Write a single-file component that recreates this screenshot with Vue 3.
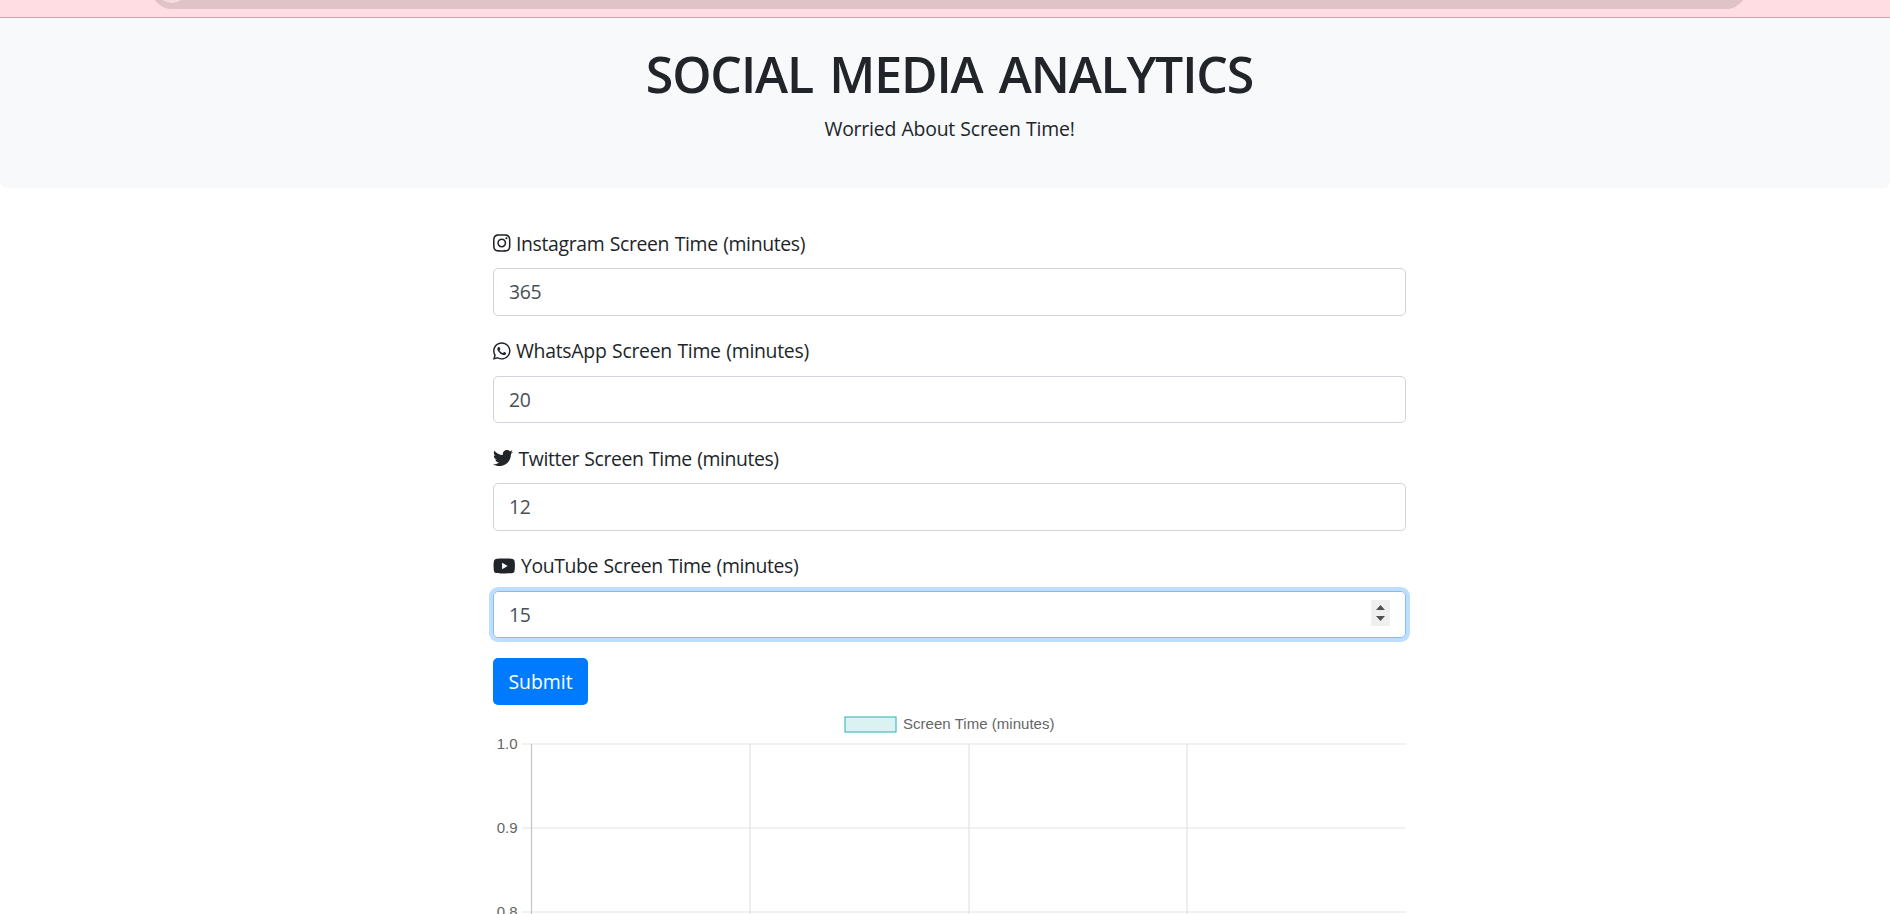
<script setup>
const fields = [
  { id: 'instagram', label: 'Instagram Screen Time (minutes)', value: 365, w: 448, d: 'M224.1 141c-63.6 0-114.9 51.3-114.9 114.9s51.3 114.9 114.9 114.9S339 319.5 339 255.9 287.7 141 224.1 141zm0 189.6c-41.1 0-74.7-33.5-74.7-74.7s33.5-74.7 74.7-74.7 74.7 33.5 74.7 74.7-33.6 74.7-74.7 74.7zm146.4-194.3c0 14.9-12 26.8-26.8 26.8-14.9 0-26.8-12-26.8-26.8s12-26.8 26.8-26.8 26.8 12 26.8 26.8zm76.1 27.2c-1.7-35.9-9.9-67.7-36.2-93.9-26.2-26.2-58-34.4-93.9-36.2-37-2.1-147.9-2.1-184.9 0-35.8 1.7-67.6 9.9-93.9 36.1s-34.4 58-36.2 93.9c-2.1 37-2.1 147.9 0 184.9 1.7 35.9 9.9 67.7 36.2 93.9s58 34.4 93.9 36.2c37 2.1 147.9 2.1 184.9 0 35.9-1.7 67.7-9.9 93.9-36.2 26.2-26.2 34.4-58 36.2-93.9 2.1-37 2.1-147.8 0-184.8zM398.8 388c-7.8 19.6-22.9 34.7-42.6 42.6-29.5 11.7-99.5 9-132.1 9s-102.7 2.6-132.1-9c-19.6-7.8-34.7-22.9-42.6-42.6-11.7-29.5-9-99.5-9-132.1s-2.6-102.7 9-132.1c7.8-19.6 22.9-34.7 42.6-42.6 29.5-11.7 99.5-9 132.1-9s102.7-2.6 132.1 9c19.6 7.8 34.7 22.9 42.6 42.6 11.7 29.5 9 99.5 9 132.1s2.7 102.7-9 132.1z' },
  { id: 'whatsapp', label: 'WhatsApp Screen Time (minutes)', value: 20, w: 448, d: 'M380.9 97.1C339 55.1 283.2 32 223.9 32c-122.4 0-222 99.6-222 222 0 39.1 10.2 77.3 29.6 111L0 480l117.7-30.9c32.4 17.7 68.9 27 106.1 27h.1c122.3 0 224.1-99.6 224.1-222 0-59.3-25.2-115-67.1-157zm-157 341.6c-33.2 0-65.7-8.9-94-25.7l-6.7-4-69.8 18.3L72 359.2l-4.4-7c-18.5-29.4-28.2-63.3-28.2-98.2 0-101.7 82.8-184.5 184.6-184.5 49.3 0 95.6 19.2 130.4 54.1 34.8 34.9 56.2 81.2 56.1 130.5 0 101.8-84.9 184.6-186.6 184.6zm101.2-138.2c-5.5-2.8-32.8-16.2-37.9-18-5.1-1.9-8.8-2.8-12.5 2.8-3.7 5.6-14.3 18-17.6 21.8-3.2 3.7-6.5 4.2-12 1.4-32.6-16.3-54-29.1-75.5-66-5.7-9.8 5.7-9.1 16.3-30.3 1.8-3.7.9-6.9-.5-9.7-1.4-2.8-12.5-30.1-17.1-41.2-4.5-10.8-9.1-9.3-12.5-9.5-3.2-.2-6.9-.2-10.6-.2-3.7 0-9.7 1.4-14.8 6.9-5.1 5.6-19.4 19-19.4 46.3 0 27.3 19.9 53.7 22.6 57.4 2.8 3.7 39.1 59.7 94.8 83.8 35.2 15.2 49 16.5 66.6 13.9 10.7-1.6 32.8-13.4 37.4-26.4 4.6-13 4.6-24.1 3.2-26.4-1.3-2.5-5-3.9-10.5-6.6z' },
  { id: 'twitter', label: 'Twitter Screen Time (minutes)', value: 12, w: 512, d: 'M459.37 151.716c.325 4.548.325 9.097.325 13.645 0 138.72-105.583 298.558-298.558 298.558-59.452 0-114.68-17.219-161.137-47.106 8.447.974 16.568 1.299 25.34 1.299 49.055 0 94.213-16.568 130.274-44.832-46.132-.975-84.792-31.188-98.112-72.772 6.498.974 12.995 1.624 19.818 1.624 9.421 0 18.843-1.3 27.614-3.573-48.081-9.747-84.143-51.98-84.143-102.985v-1.299c13.969 7.797 30.214 12.67 47.431 13.319-28.264-18.843-46.781-51.005-46.781-87.391 0-19.492 5.197-37.36 14.294-52.954 51.655 63.675 129.3 105.258 216.365 109.807-1.624-7.797-2.599-15.918-2.599-24.04 0-57.828 46.782-104.934 104.934-104.934 30.213 0 57.502 12.67 76.67 33.137 23.715-4.548 46.456-13.32 66.599-25.34-7.798 24.366-24.366 44.833-46.132 57.827 21.117-2.273 41.584-8.122 60.426-16.243-14.292 20.791-32.161 39.308-52.628 54.253z' },
  { id: 'youtube', label: 'YouTube Screen Time (minutes)', value: 15, w: 576, focused: true, d: 'M549.655 124.083c-6.281-23.65-24.787-42.276-48.284-48.597C458.781 64 288 64 288 64S117.22 64 74.629 75.486c-23.497 6.322-42.003 24.947-48.284 48.597-11.412 42.867-11.412 132.305-11.412 132.305s0 89.438 11.412 132.305c6.281 23.65 24.787 41.5 48.284 47.821C117.22 448 288 448 288 448s170.78 0 213.371-11.486c23.497-6.321 42.003-24.171 48.284-47.821 11.412-42.867 11.412-132.305 11.412-132.305s0-89.438-11.412-132.305zm-317.51 213.508V175.185l142.739 81.205-142.739 81.201z' }
]
// y-axis ticks and x gridlines, in chart coordinates
const ticks = [{ y: 36, t: '1.0' }, { y: 120, t: '0.9' }, { y: 204, t: '0.8' }]
const columns = [257, 476, 694]
</script>

<template>
  <div class="page">
    <div class="browser-bar">
      <div class="address"><span class="site-info"></span></div>
    </div>
    <header class="hero">
      <h1>SOCIAL MEDIA ANALYTICS</h1>
      <p>Worried About Screen Time!</p>
    </header>
    <main>
      <form @submit.prevent>
        <div v-for="f in fields" :key="f.id" class="group">
          <div class="label" :class="f.id">
            <svg :viewBox="`0 0 ${f.w} 512`" class="icon"><path :d="f.d" /></svg>
            <span>{{ f.label }}</span>
          </div>
          <div class="control" :class="{ focused: f.focused }">
            <span class="value">{{ f.value }}</span>
            <svg v-if="f.focused" class="spinner" width="19" height="26" viewBox="0 0 19 26">
              <rect width="19" height="26" fill="#efefef" />
              <path d="M5 10 9.5 5 14 10ZM5 16 9.5 21 14 16Z" fill="#505050" />
            </svg>
          </div>
        </div>
        <button type="submit">Submit</button>
      </form>
      <svg class="chart" width="914" height="206" viewBox="0 0 914 206">
        <rect x="352" y="9" width="51" height="15" fill="#dbf2f2" stroke="#4bc0c0" stroke-width="1.25" />
        <text x="410" y="20.7" textLength="151.5">Screen Time (minutes)</text>
        <g v-for="t in ticks" :key="t.t">
          <text x="24.5" :y="t.y + 4.6" text-anchor="end">{{ t.t }}</text>
          <path :d="`M29 ${t.y}H912.5`" class="grid" />
        </g>
        <path v-for="x in columns" :key="x" :d="`M${x} 36V206`" class="grid" />
        <path d="M38.5 36V206" class="axis" />
      </svg>
    </main>
  </div>
</template>

<style>
html, body { background: #fff; }
</style>

<style scoped>
.page { height: 914px; overflow: hidden; font: 370 19.4px/30px "Open Sans", "Noto Sans", sans-serif; color: #212529; background: #fff; }
.browser-bar { position: relative; height: 18px; box-sizing: border-box; overflow: hidden; background: #ffdde3; border-bottom: 1px solid #c7a8b0; }
.address { position: absolute; left: 151px; top: -33px; width: 1596px; height: 42px; border-radius: 21px; background: #dfc3c7; }
.site-info { position: absolute; left: 5px; top: 4px; width: 32px; height: 32px; border-radius: 50%; background: #f8d9de; }
.hero { height: 170px; box-sizing: border-box; padding: 26px 0 0 9px; text-align: center; background: #f8f9fb; border-radius: 0 0 7px 7px; }
h1 { margin: 0; font-size: 50px; line-height: 60px; font-weight: 550; letter-spacing: -1.15px; word-spacing: 4.5px; }
p { margin: 10px 0 0; letter-spacing: -.2px; word-spacing: .5px; }
main { width: 913px; margin: 0 auto; padding: 40px 0 0 9px; }
.group { height: 107.5px; box-sizing: border-box; }
.label { display: flex; height: 40px; gap: 5.5px; align-items: flex-start; white-space: nowrap; word-spacing: .8px; }
.label span { padding-top: .8px; }
.icon { height: 20px; flex: none; margin-top: 5px; fill: #212529; }
.instagram { letter-spacing: -.35px; }
.whatsapp { letter-spacing: -.28px; }
.twitter { letter-spacing: -.4px; }
.youtube { letter-spacing: -.38px; }
.control { height: 47.5px; box-sizing: border-box; display: flex; align-items: center; justify-content: space-between; padding: 1px 15px 0; border: 1px solid #ced4da; border-radius: 5px; color: #495057; }
.control.focused { border-color: #80bdff; box-shadow: 0 0 0 4px #bfdeff; }
.value { letter-spacing: -.3px; }
.spinner { margin-top: -3px; }
button { display: block; width: 95px; height: 47px; margin-bottom: .5px; padding: 1px 0 0; border: 0; border-radius: 5px; background: #007bff; color: #fff; font: inherit; font-weight: 400; }
.chart { display: block; margin-top: 2.5px; font: 15px "Liberation Sans", Arial, sans-serif; fill: #666; }
.grid { stroke: #e3e3e3; stroke-width: 1.2; }
.axis { stroke: #c4c4c4; stroke-width: 1.2; }
</style>
